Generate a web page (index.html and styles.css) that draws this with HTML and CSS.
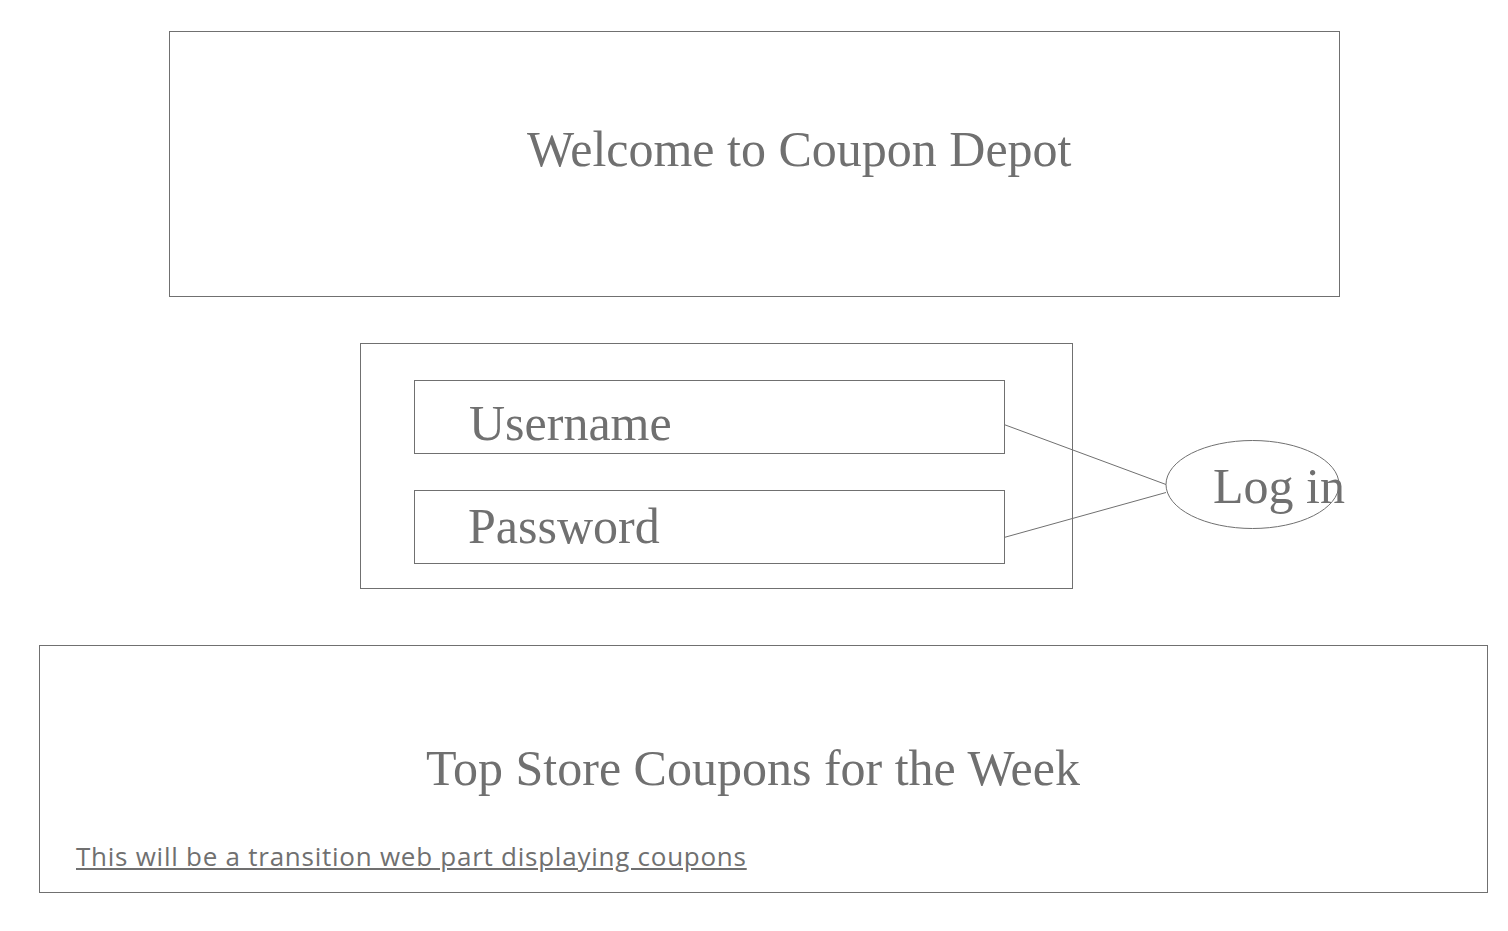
FILE: index.html
```html
<!DOCTYPE html>
<html lang="en">
<head>
  <meta charset="UTF-8">
  <title>Coupon Depot</title>
  <link rel="stylesheet" href="styles.css">
</head>
<body>
  <div class="header">
    <h1 class="title">Welcome to Coupon Depot</h1>
  </div>

  <div class="login-row">
    <div class="login-box">
      <div class="field field-user">Username</div>
      <div class="field field-pass">Password</div>
    </div>
    <svg class="links" width="1508" height="246" viewBox="0 0 1508 246">
      <line x1="1004" y1="81.5" x2="1166" y2="141.5" />
      <line x1="1004" y1="194.5" x2="1166" y2="149.5" />
      <ellipse cx="1252.5" cy="141.5" rx="86.5" ry="44" />
    </svg>
    <div class="login-btn">Log in</div>
  </div>

  <div class="coupons">
    <h2 class="coupons-title">Top Store Coupons for the Week</h2>
    <a class="coupons-link" href="#">This will be a transition web part displaying coupons</a>
  </div>
</body>
</html>
```

FILE: styles.css
```css
body {
  margin: 0;
  background: #fff;
  color: #707070;
  font-family: "Liberation Serif", "Times New Roman", serif;
}
.header {
  box-sizing: border-box;
  width: 1171px;
  height: 266px;
  margin: 31px 0 0 169px;
  border: 1px solid #707070;
  padding: 92px 0 0 357px;
}
.title, .coupons-title {
  margin: 0;
  font-size: 50px;
  font-weight: normal;
  line-height: 50px;
}
.login-row {
  position: relative;
  margin-top: 46px;
}
.login-box {
  box-sizing: border-box;
  width: 713px;
  height: 246px;
  margin-left: 360px;
  border: 1px solid #707070;
  padding: 36px 0 0 53px;
}
.field {
  box-sizing: border-box;
  width: 591px;
  height: 74px;
  border: 1px solid #707070;
  font-size: 50px;
  line-height: 50px;
}
.field-user {
  padding: 17px 0 0 54px;
}
.field-pass {
  margin-top: 36px;
  padding: 10px 0 0 53px;
}
.links {
  position: absolute;
  left: 0;
  top: 0;
}
.links line, .links ellipse {
  stroke: #707070;
  stroke-width: 1;
  fill: none;
}
.login-btn {
  position: absolute;
  left: 1213px;
  top: 118px;
  font-size: 50px;
  line-height: 50px;
}
.coupons {
  box-sizing: border-box;
  width: 1449px;
  height: 248px;
  margin: 56px 0 0 39px;
  border: 1px solid #707070;
  padding: 97px 0 0 386px;
}
.coupons-link {
  display: inline-block;
  margin: 50px 0 0 -350px;
  color: #707070;
  font-family: "Open Sans", sans-serif;
  font-size: 26px;
  line-height: 26px;
  letter-spacing: 0.75px;
}
```
